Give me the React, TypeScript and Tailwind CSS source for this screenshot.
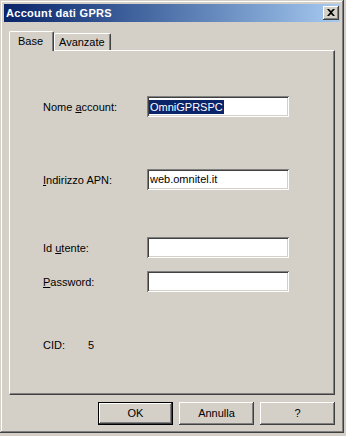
const raised =
  "shadow-[inset_-1px_-1px_#404040,inset_1px_1px_#ffffff,inset_-2px_-2px_#808080,inset_2px_2px_#d4d0c8]";
const sunken =
  "shadow-[inset_1px_1px_#808080,inset_-1px_-1px_#ffffff,inset_2px_2px_#404040,inset_-2px_-2px_#d4d0c8]";

function Field({ children }: { children?: React.ReactNode }) {
  return (
    <div className={`w-[142px] h-[21px] bg-white ${sunken} flex items-center pl-[2px]`}>
      {children}
    </div>
  );
}

function Row({ label, mt, children }: { label: React.ReactNode; mt: string; children?: React.ReactNode }) {
  return (
    <div className={`flex items-center h-[21px] ${mt}`}>
      <div className="w-[104px] pt-[2px]">{label}</div>
      <Field>{children}</Field>
    </div>
  );
}

function Button({ label, isDefault }: { label: string; isDefault?: boolean }) {
  return (
    <div className={`w-[75px] h-[23px] ${isDefault ? "border border-black" : ""}`}>
      <div className={`w-full h-full flex items-center justify-center ${raised}`}>{label}</div>
    </div>
  );
}

export default function App() {
  return (
    <div
      className="w-[346px] h-[436px] bg-[#d4d0c8] text-[11px] text-black leading-[13px]"
      style={{ fontFamily: '"Liberation Sans", Arial, sans-serif' }}
    >
      <div className="w-[344px] h-[433px] p-[4px] flex flex-col shadow-[inset_-1px_-1px_#404040,inset_1px_1px_#d4d0c8,inset_-2px_-2px_#808080,inset_2px_2px_#ffffff]">
        {/* title bar */}
        <div className="h-[18px] flex items-center justify-between pl-[2px] pr-[1px] bg-linear-to-r from-[#0a246a] to-[#a6caf0]">
          <span className="text-white font-bold tracking-[0.3px]">Account dati GPRS</span>
          <div className={`w-[16px] h-[14px] bg-[#d4d0c8] ${raised} flex items-center justify-center`}>
            <svg width="8" height="7" viewBox="0 0 8 7" className="-mt-[1px]">
              <path d="M0 0h2l2 2 2-2h2L5 3.5 8 7H6L4 5 2 7H0l3-3.5z" fill="#000" />
            </svg>
          </div>
        </div>

        {/* tabs */}
        <div className="mt-[9px] ml-[5px] flex items-end">
          <div className="relative z-10 -mb-[1px] h-[20px] w-[45px] bg-[#d4d0c8] border-t border-l border-white border-r border-r-[#404040] rounded-t-[2px] shadow-[inset_-1px_0_#808080] pl-[8px] pt-[3px]">
            Base
          </div>
          <div className="h-[17px] w-[57px] border-t border-l border-white border-r border-r-[#404040] rounded-t-[2px] shadow-[inset_-1px_0_#808080] pl-[4px] pt-[2px]">
            Avanzate
          </div>
        </div>

        {/* panel */}
        <div className="ml-[5px] w-[326px] h-[345px] border-t border-l border-white border-r border-b border-r-[#404040] border-b-[#404040] shadow-[inset_-1px_-1px_#808080] pl-[33px] pt-[45px] flex flex-col">
          <Row
            mt="mt-0"
            label={
              <>
                Nome <u>a</u>ccount:
              </>
            }
          >
            <span className="bg-[#0a246a] text-white px-[1px] leading-[14px]">OmniGPRSPC</span>
          </Row>
          <Row
            mt="mt-[52px]"
            label={
              <>
                <u>I</u>ndirizzo APN:
              </>
            }
          >
            <span className="px-[1px]">web.omnitel.it</span>
          </Row>
          <Row
            mt="mt-[47px]"
            label={
              <>
                Id <u>u</u>tente:
              </>
            }
          />
          <Row
            mt="mt-[13px]"
            label={
              <>
                <u>P</u>assword:
              </>
            }
          />
          <div className="flex items-center h-[21px] mt-[43px]">
            <div className="w-[45px]">CID:</div>
            <div>5</div>
          </div>
        </div>

        {/* buttons */}
        <div className="mt-[7px] ml-[5px] w-[326px] flex justify-end gap-[6px]">
          <Button label="OK" isDefault />
          <Button label="Annulla" />
          <Button label="?" />
        </div>
      </div>
    </div>
  );
}
